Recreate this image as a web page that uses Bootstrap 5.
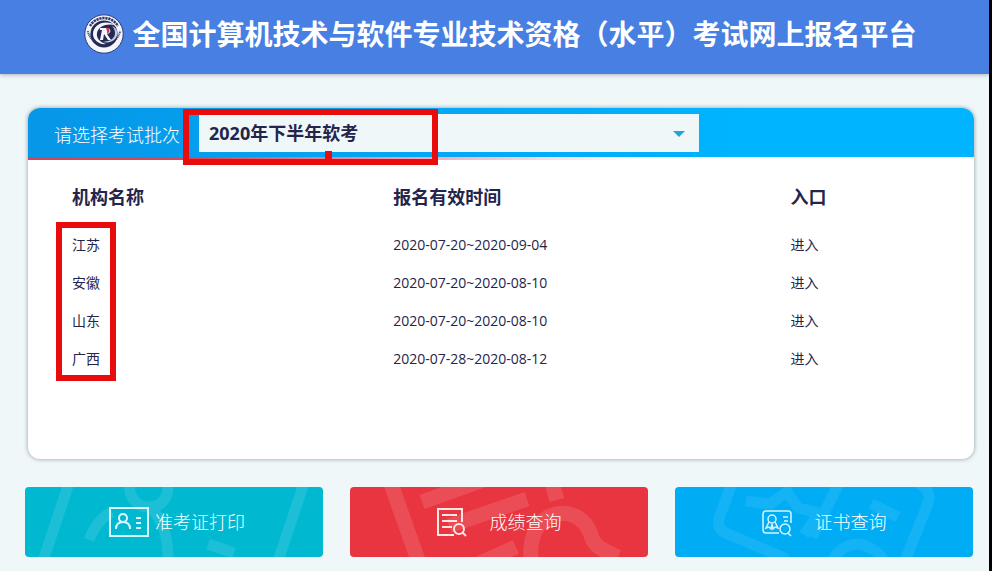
<!DOCTYPE html>
<html lang="zh-CN">
<head>
<meta charset="utf-8">
<meta name="viewport" content="width=device-width, initial-scale=1">
<title>全国计算机技术与软件专业技术资格（水平）考试网上报名平台</title>
<link href="https://cdn.jsdelivr.net/npm/bootstrap@5.3.0/dist/css/bootstrap.min.css" rel="stylesheet">
<style>
  html { background: #000; }
  body {
    font-family: "Open Sans", "Noto Sans CJK SC", sans-serif;
    color: #25244a;
    background: #eff7f9;
    border-right: 3px solid #000;
  }
  .site-header { min-height: 74px; padding: 0 8px 6px 20px; background: #4780e2; box-shadow: 0 1px 4px rgba(70, 80, 90, .4); }
  .site-title { font-size: 28px; line-height: 40px; }
  .seal { width: 40px; height: 40px; }
  .batch-panel {
    margin: 34px 15px 0 28px;
    min-height: 351px;
    border-radius: 12px;
    box-shadow: 0 0 4px rgba(60, 70, 80, .55);
  }
  .batch-bar {
    min-height: 49px;
    padding-left: 26px;
    border-radius: 12px 12px 0 0;
    background: linear-gradient(90deg, #0796e8, #00b4ff 75%);
  }
  .batch-label { font-size: 18px; font-weight: 300; line-height: 27px; width: 145px; padding-top: 6px; }
  .batch-line { height: 3px; background: linear-gradient(90deg, #c84a5c, #d8485a 18%, #f4a0b0 40%, #fff 65%); }
  .batch-choice { width: 500px; }
  .batch-select {
    appearance: none;
    height: 38px;
    padding: 2px 40px 0 10px;
    border: 0;
    border-radius: 0;
    background: #eff7f8;
    color: #25244a;
    font-size: 18px;
    font-weight: 700;
  }
  .caret-mark { width: 12px; height: 6px; right: 14px; top: 17px; pointer-events: none; }
  .note-box { border: 6px solid #e80c0c; pointer-events: none; }
  .note-batch { left: -16px; top: -5px; width: 255px; height: 56px; }
  .note-batch::after {
    content: ""; position: absolute; left: 136px; bottom: 0;
    width: 7px; height: 8px; background: #e80c0c;
  }
  .region-table { margin-top: 8px; font-size: 14px; }
  .region-table th { height: 58px; font-size: 18px; font-weight: 700; }
  .region-table td { height: 38px; }
  .region-table th, .region-table td { padding: 0; vertical-align: middle; line-height: 20px; }
  .region-table th:first-child, .region-table td:first-child { padding-left: 44px; }
  .col-region { width: 38.6%; }
  .col-period { width: 42%; }
  .note-region { left: 28px; top: 54px; width: 60px; height: 159px; }
  .enter-link { color: inherit; text-decoration: none; }
  .quick-row { margin: 28px 16px 14px 25px; gap: 27px; }
  .quick-btn {
    flex: 1 1 0;
    height: 70px;
    border: 0;
    border-radius: 4px;
    font-size: 18px;
    font-weight: 300;
    color: #fff;
  }
  .quick-btn:hover { color: #fff; }
  .quick-teal { background: #00b8d0; }
  .quick-red { background: #e93540; }
  .quick-blue { background: #00adf5; }
  .quick-teal .quick-face { gap: 6px; padding-left: 6px; }
  .quick-face { gap: 23px; }
  .quick-art { inset: 0; }
</style>
<script src="https://cdn.jsdelivr.net/npm/bootstrap@5.3.0/dist/js/bootstrap.bundle.min.js"></script>
</head>
<body>
<header class="site-header d-flex align-items-center justify-content-center text-white">
  <svg class="seal me-2 flex-shrink-0" viewBox="0 0 40 40" aria-hidden="true">
    <circle cx="20" cy="20" r="19.2" fill="#f4f6fb" stroke="#2b3a78"/>
    <path d="M6 12A16.3 16.3 0 0 1 34 12" fill="none" stroke="#333c70" stroke-width="2.6" stroke-dasharray="2.3 .7"/>
    <path d="M3.8 17A16.5 16.5 0 0 0 36.2 17" fill="none" stroke="#4a5483" stroke-width="2" stroke-dasharray="1.2 .6"/>
    <circle cx="20" cy="20" r="13.6" fill="#252955"/>
    <path d="M31 11C20 5 9 11 9 20c0 6 6 11 13 10-6-2-10-6-9-11 1-7 10-10 18-8z" fill="#f4f6fb"/>
    <path d="M28 12c5 5 4 13-4 15l-5 1c9 2 16-4 14-11-1-3-3-4-5-5z" fill="#c6cbe0"/>
    <path d="M16 14h7c5 0 4 6 0 6l4 6h-3l-4-6-1 6h-3l2-10h-2z" fill="#f4f6fb"/>
    <path d="M22 14c4-1 5 4 1 6v-3z" fill="#cf3550"/>
  </svg>
  <h1 class="site-title fw-bold mb-0">全国计算机技术与软件专业技术资格（水平）考试网上报名平台</h1>
</header>

<main>
  <section class="batch-panel bg-white">
    <div class="batch-bar d-flex align-items-center">
      <label class="batch-label text-white flex-shrink-0" for="batch">请选择考试批次</label>
      <div class="batch-choice position-relative">
        <select class="batch-select w-100 d-block" id="batch">
          <option selected>2020年下半年软考</option>
        </select>
        <svg class="caret-mark position-absolute" viewBox="0 0 12 6" aria-hidden="true"><path d="M0 0h12L6 6z" fill="#24a3d6"/></svg>
        <div class="note-box note-batch position-absolute"></div>
      </div>
    </div>
    <div class="batch-line"></div>
    <div class="position-relative">
      <table class="region-table w-100">
        <colgroup><col class="col-region"><col class="col-period"><col></colgroup>
        <thead><tr><th scope="col">机构名称</th><th scope="col">报名有效时间</th><th scope="col">入口</th></tr></thead>
        <tbody>
          <tr><td>江苏</td><td>2020-07-20~2020-09-04</td><td><a class="enter-link" href="#">进入</a></td></tr>
          <tr><td>安徽</td><td>2020-07-20~2020-08-10</td><td><a class="enter-link" href="#">进入</a></td></tr>
          <tr><td>山东</td><td>2020-07-20~2020-08-10</td><td><a class="enter-link" href="#">进入</a></td></tr>
          <tr><td>广西</td><td>2020-07-28~2020-08-12</td><td><a class="enter-link" href="#">进入</a></td></tr>
        </tbody>
      </table>
      <div class="note-box note-region position-absolute"></div>
    </div>
  </section>

  <div class="quick-row d-flex">
    <button type="button" class="quick-btn quick-teal btn p-0 position-relative overflow-hidden">
      <svg class="quick-art position-absolute w-100 h-100" viewBox="0 0 298 70" preserveAspectRatio="xMidYMid slice" fill="none" stroke="#fff" stroke-opacity=".11" stroke-width="11" aria-hidden="true">
        <path d="M44 -4L18 74M279 -4L253 74M105 -6C102 10 112 20 124 20S146 10 142 -6M64 53C70 38 78 29 87 25M124 20C138 31 143 48 143 74M183 57L209 66"/>
      </svg>
      <span class="quick-face position-relative d-flex align-items-center justify-content-center">
        <svg width="40" height="30" viewBox="0 0 40 30" fill="none" stroke="#d9fbff" stroke-width="2" aria-hidden="true">
          <path d="M1 1h38v28H1z"/><circle cx="14" cy="11" r="4"/><path d="M7 22c0-5 3-7 7-7s7 2 7 7M27 11h5M27 16h5M27 21h5"/>
        </svg>
        <span>准考证打印</span>
      </span>
    </button>
    <button type="button" class="quick-btn quick-red btn p-0 position-relative overflow-hidden">
      <svg class="quick-art position-absolute w-100 h-100" viewBox="0 0 298 70" preserveAspectRatio="xMidYMid slice" fill="none" stroke="#fff" stroke-opacity=".12" stroke-width="15" aria-hidden="true">
        <path d="M40 -6L69 76M72 15L136 -8M99 39L177 12M130 76L166 60M202 -4L207 13M182 76C178 57 184 38 198 30C219 20 236 32 241 48C243 58 252 63 268 70"/>
      </svg>
      <span class="quick-face position-relative d-flex align-items-center justify-content-center">
        <svg width="30" height="30" viewBox="0 0 30 30" fill="none" stroke="#ffe8e4" stroke-width="2" aria-hidden="true">
          <path d="M17 28H1V2h24v13M5 8h15M5 14h15M5 20h10"/><circle cx="22" cy="22" r="5"/><path d="M25 25l4 4"/>
        </svg>
        <span>成绩查询</span>
      </span>
    </button>
    <button type="button" class="quick-btn quick-blue btn p-0 position-relative overflow-hidden">
      <svg class="quick-art position-absolute w-100 h-100" viewBox="0 0 298 70" preserveAspectRatio="xMidYMid slice" fill="none" stroke="#fff" stroke-opacity=".08" stroke-width="11" aria-hidden="true">
        <path d="M57 -4L44 31C42 40 45 44 53 47L112 72M239 -6C253 0 256 7 253 16L230 74M71 14L95 17L112 5L123 21L144 26L129 48M164 -4L137 50M196 17L223 30M156 76C164 59 180 54 191 59S207 68 209 76"/>
      </svg>
      <span class="quick-face position-relative d-flex align-items-center justify-content-center">
        <svg width="30" height="30" viewBox="0 0 30 30" fill="none" stroke="#d6f4ff" stroke-width="1.5" aria-hidden="true">
          <path d="M17 26H4q-3 0-3-3V7q0-3 3-3h22q3 0 3 3v9M21 10h5M22 14h4"/>
          <circle cx="10" cy="12" r="4"/><path d="M7 15l-3 6 3-1 2 2 1-5 1 5 2-2 3 1-3-6"/>
          <circle cx="23" cy="22" r="5"/><path d="M26 26l3 3"/>
        </svg>
        <span>证书查询</span>
      </span>
    </button>
  </div>
</main>
</body>
</html>
